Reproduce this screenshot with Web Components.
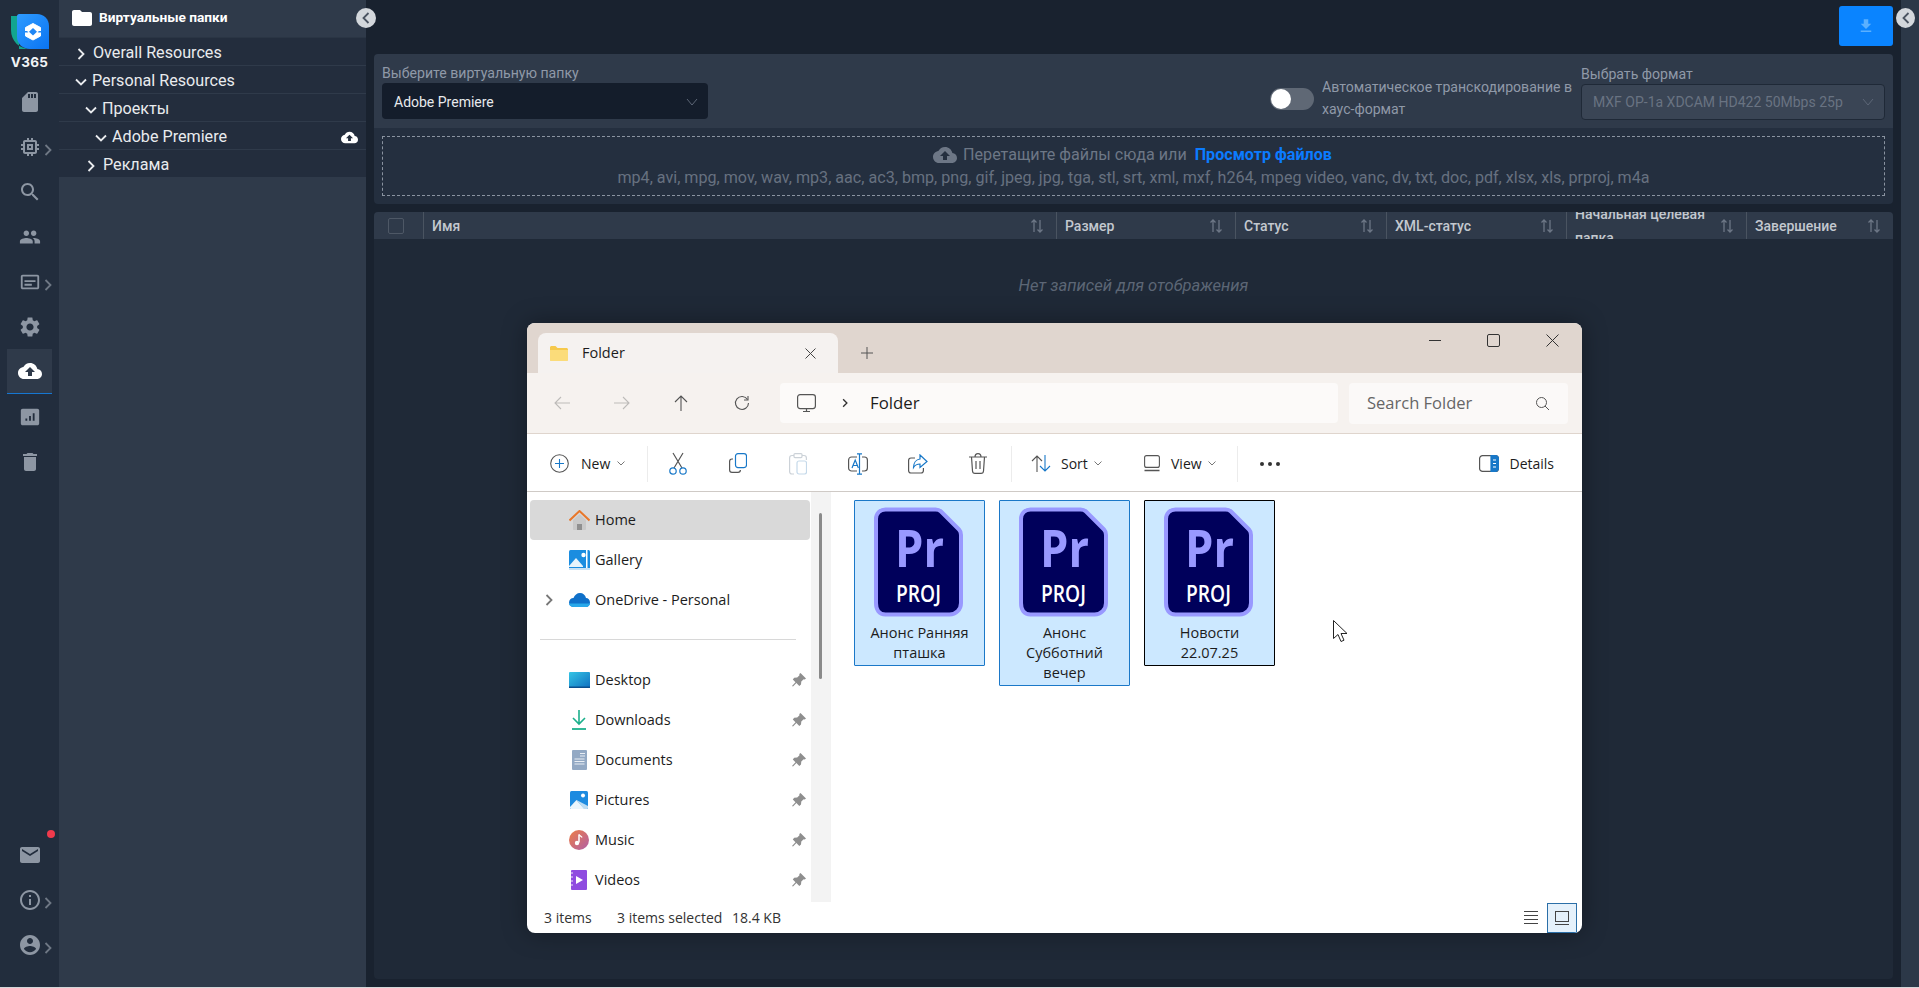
<!DOCTYPE html>
<html lang="ru">
<head>
<meta charset="utf-8">
<title>V365</title>
<style>
  html, body { margin: 0; height: 100%; background: #d4d6d8; overflow: hidden; }
  body { font-family: Roboto, "Liberation Sans", sans-serif; }
  #app { display: flex; height: 987px; position: relative; background: #19222f; }
</style>
</head>
<body>
<div id="app">
  <v-rail></v-rail>
  <v-folders></v-folders>
  <v-main></v-main>
  <v-strip></v-strip>
  <ex-window></ex-window>
</div>

<script>
const MI = {
  sd: "M18 2h-8L4.02 8 4 20c0 1.1.9 2 2 2h12c1.1 0 2-.9 2-2V4c0-1.1-.9-2-2-2zm-6 6h-2V4h2v4zm3 0h-2V4h2v4zm3 0h-2V4h2v4z",
  chip: "M15 9H9v6h6V9zm-2 4h-2v-2h2v2zm8-2V9h-2V7c0-1.1-.9-2-2-2h-2V3h-2v2h-2V3H9v2H7c-1.1 0-2 .9-2 2v2H3v2h2v2H3v2h2v2c0 1.1.9 2 2 2h2v2h2v-2h2v2h2v-2h2c1.1 0 2-.9 2-2v-2h2v-2h-2v-2h2zm-4 6H7V7h10v10z",
  search: "M15.5 14h-.79l-.28-.27C15.41 12.59 16 11.11 16 9.5 16 5.91 13.09 3 9.5 3S3 5.91 3 9.5 5.91 16 9.5 16c1.61 0 3.09-.59 4.23-1.57l.27.28v.79l5 4.99L20.49 19l-4.99-5zm-6 0C7.01 14 5 11.99 5 9.5S7.01 5 9.5 5 14 7.01 14 9.5 11.99 14 9.5 14z",
  people: "M16 11c1.66 0 2.99-1.34 2.99-3S17.66 5 16 5c-1.66 0-3 1.34-3 3s1.34 3 3 3zm-8 0c1.66 0 2.99-1.34 2.99-3S9.66 5 8 5C6.34 5 5 6.34 5 8s1.34 3 3 3zm0 2c-2.33 0-7 1.17-7 3.5V19h14v-2.5c0-2.33-4.67-3.5-7-3.5zm8 0c-.29 0-.62.02-.97.05 1.16.84 1.97 1.97 1.97 3.45V19h6v-2.5c0-2.33-4.67-3.5-7-3.5z",
  card: "M20 4H4c-1.1 0-2 .9-2 2v12c0 1.1.9 2 2 2h16c1.1 0 2-.9 2-2V6c0-1.1-.9-2-2-2zm0 14H4V6h16v12zM6 10h12v2H6zm0 4h8v2H6z",
  gear: "M19.14 12.94c.04-.3.06-.61.06-.94 0-.32-.02-.64-.07-.94l2.03-1.58c.18-.14.23-.41.12-.61l-1.92-3.32c-.12-.22-.37-.29-.59-.22l-2.39.96c-.5-.38-1.03-.7-1.62-.94l-.36-2.54c-.04-.24-.24-.41-.48-.41h-3.84c-.24 0-.43.17-.47.41l-.36 2.54c-.59.24-1.13.57-1.62.94l-2.39-.96c-.22-.08-.47 0-.59.22L2.74 8.87c-.12.21-.08.47.12.61l2.03 1.58c-.05.3-.09.63-.09.94s.02.64.07.94l-2.03 1.58c-.18.14-.23.41-.12.61l1.92 3.32c.12.22.37.29.59.22l2.39-.96c.5.38 1.03.7 1.62.94l.36 2.54c.05.24.24.41.48.41h3.84c.24 0 .44-.17.47-.41l.36-2.54c.59-.24 1.13-.56 1.62-.94l2.39.96c.22.08.47 0 .59-.22l1.92-3.32c.12-.22.07-.47-.12-.61l-2.01-1.58zM12 15.6c-1.98 0-3.6-1.62-3.6-3.6s1.62-3.6 3.6-3.6 3.6 1.62 3.6 3.6-1.62 3.6-3.6 3.6z",
  cloud: "M19.35 10.04C18.67 6.59 15.64 4 12 4 9.11 4 6.6 5.64 5.35 8.04 2.34 8.36 0 10.91 0 14c0 3.31 2.69 6 6 6h13c2.76 0 5-2.24 5-5 0-2.64-2.05-4.78-4.65-4.96zM14 13v4h-4v-4H7l5-5 5 5h-3z",
  chart: "M4 3h16c1.1 0 2 .9 2 2v14c0 1.1-.9 2-2 2H4c-1.1 0-2-.9-2-2V5c0-1.1.9-2 2-2zm3 13h2v-2.5H7V16zm4 0h2v-5h-2v5zm4 0h2V8h-2v8z",
  trash: "M6 19c0 1.1.9 2 2 2h8c1.1 0 2-.9 2-2V7H6v12zM19 4h-3.5l-1-1h-5l-1 1H5v2h14V4z",
  mail: "M20 4H4c-1.1 0-2 .9-2 2v12c0 1.1.9 2 2 2h16c1.1 0 2-.9 2-2V6c0-1.1-.9-2-2-2zm0 4l-8 5-8-5V6l8 5 8-5v2z",
  info: "M11 7h2v2h-2zm0 4h2v6h-2zm1-9C6.48 2 2 6.48 2 12s4.48 10 10 10 10-4.48 10-10S17.52 2 12 2zm0 18c-4.41 0-8-3.59-8-8s3.59-8 8-8 8 3.59 8 8-3.59 8-8 8z",
  user: "M12 2C6.48 2 2 6.48 2 12s4.48 10 10 10 10-4.48 10-10S17.52 2 12 2zm0 3c1.66 0 3 1.34 3 3s-1.34 3-3 3-3-1.34-3-3 1.34-3 3-3zm0 14.2c-2.5 0-4.71-1.28-6-3.22.03-1.99 4-3.08 6-3.08 1.99 0 5.97 1.09 6 3.08-1.29 1.94-3.5 3.22-6 3.22z",
  download: "M19 9h-4V3H9v6H5l7 7 7-7zM5 18v2h14v-2H5z",
  folder: "M10 4H4c-1.1 0-2 .9-2 2v12c0 1.1.9 2 2 2h16c1.1 0 2-.9 2-2V8c0-1.1-.9-2-2-2h-8l-2-2z"
};
function mi(name, size, color) {
  return `<svg width="${size}" height="${size}" viewBox="0 0 24 24" fill="${color}"><path d="${MI[name]}"/></svg>`;
}
const CHEV_R = `<svg width="8" height="12" viewBox="0 0 8 12" fill="none" stroke="currentColor" stroke-width="1.8"><path d="M1.5 1l5 5-5 5"/></svg>`;
const CHEV_D = `<svg width="12" height="8" viewBox="0 0 12 8" fill="none" stroke="currentColor" stroke-width="1.8"><path d="M1 1.5l5 5 5-5"/></svg>`;

class VRail extends HTMLElement {
  constructor() { super(); this.attachShadow({mode: "open"}); }
  connectedCallback() { this.render(); }
  item(name, size, more, active) {
    return `<div class="it ${active ? "on" : ""}">${mi(name, size, active ? "#fff" : "#8d96a3")}${more ? `<span class="more">${CHEV_R}</span>` : ""}</div>`;
  }
  render() {
    this.shadowRoot.innerHTML = `<style>
      :host { display: flex; flex-direction: column; width: 59px; flex: none; background: #222d3d; box-sizing: border-box; padding-bottom: 20px; }
      .logo { height: 79px; box-sizing: border-box; padding-top: 14px; display: flex; flex-direction: column; align-items: center; }
      .logo b { color: #f2f4f6; font: 700 13.5px/1 "Inter", Roboto, sans-serif; margin-top: 7px; letter-spacing: .3px; }
      .it { height: 45px; position: relative; display: flex; align-items: center; justify-content: center; }
      .it.on { margin: 0 7px; background: #2f3a4a; border-bottom: 1px solid #1677d2; box-sizing: border-box; }
      .more { position: absolute; left: 44px; top: 50%; margin-top: -6px; color: #6f7885; }
      .spring { flex: 1; }
      .dot { position: absolute; left: 47px; top: -2px; width: 8px; height: 8px; border-radius: 50%; background: #f03a4c; }
    </style>
    <div class="logo">
      <svg width="38" height="35" viewBox="0 0 38 35">
        <defs><linearGradient id="lg" x1="0" y1="0" x2="1" y2="1"><stop offset="0" stop-color="#2f9bff"/><stop offset="1" stop-color="#0a74f2"/></linearGradient></defs>
        <path d="M0 2h8v33h12C8 35 0 27 0 16z" fill="#12a58f"/>
        <path d="M8 0h18c7 0 12 5 12 12v23H19C12 35 6 30 6 23V2c0-1 1-2 2-2z" fill="url(#lg)"/>
        <path d="M22 9.500l7.500 4v8.500l-7.500 4-7.500-4v-8.500z" fill="#fff" stroke="#fff" stroke-width="1" stroke-linejoin="round"/>
        <path d="M22 14l4 3.700-4 3.700-4-3.700zM13.500 17h4l-1.500.8 1.500.8h-4zM30.500 17h-4l1.500.8-1.500.8h4z" fill="#1f86f5"/>
      </svg>
      <b>V365</b>
    </div>
    ${this.item("sd", 24)}
    ${this.item("chip", 24, true)}
    ${this.item("search", 24)}
    ${this.item("people", 22)}
    ${this.item("card", 22, true)}
    ${this.item("gear", 24)}
    ${this.item("cloud", 24, false, true)}
    ${this.item("chart", 22)}
    ${this.item("trash", 24)}
    <div class="spring"></div>
    <div class="it">${mi("mail", 24, "#8d96a3")}<span class="dot"></span></div>
    ${this.item("info", 24, true)}
    ${this.item("user", 24, true)}`;
  }
}
customElements.define("v-rail", VRail);

class VTreeRow extends HTMLElement {
  constructor() { super(); this.attachShadow({mode: "open"}); }
  connectedCallback() {
    const lvl = +this.getAttribute("level") || 0;
    const open = this.hasAttribute("open");
    this.shadowRoot.innerHTML = `<style>
      :host { display: flex; align-items: center; height: 28px; box-sizing: border-box; background: #232d3d; border-bottom: 1px solid #2f3a4a; color: #e9ebee; font: 400 16.15px/1 Roboto, sans-serif; padding: 4px 8px 0 ${17 + lvl * 10}px; }
      .c { width: 17px; flex: none; display: flex; justify-content: flex-start; }
      .o { margin-left: -1px; }
      .t { flex: 1; }
      svg { display: block; }
    </style>
    <span class="c ${open ? "o" : ""}">${open ? CHEV_D : `<span style="margin-left:1px">${CHEV_R}</span>`}</span>
    <span class="t"><slot></slot></span>
    ${this.hasAttribute("action") ? mi("cloud", 17, "#fff") : ""}`;
  }
}
customElements.define("v-tree-row", VTreeRow);

class VFolders extends HTMLElement {
  constructor() { super(); this.attachShadow({mode: "open"}); }
  connectedCallback() {
    this.shadowRoot.innerHTML = `<style>
      :host { display: block; width: 307px; flex: none; background: #2f3a4a; position: relative; }
      .head { height: 38px; box-sizing: border-box; padding: 0 0 2px 11px; display: flex; align-items: center; gap: 5px; color: #fff; font: 700 13.7px/1 Roboto, sans-serif; border-bottom: 1px solid #2a3544; }
      .toggle { position: absolute; right: -10px; top: 8px; width: 20px; height: 20px; border-radius: 50%; background: #d3d7dc; color: #4a5361; display: flex; align-items: center; justify-content: center; z-index: 2; }
      .toggle svg { transform: scaleX(-1); }
    </style>
    <div class="head">${mi("folder", 24, "#fff")}<span>Виртуальные папки</span></div>
    <v-tree-row>Overall Resources</v-tree-row>
    <v-tree-row open>Personal Resources</v-tree-row>
    <v-tree-row level="1" open>Проекты</v-tree-row>
    <v-tree-row level="2" open action>Adobe Premiere</v-tree-row>
    <v-tree-row level="1">Реклама</v-tree-row>
    <div class="toggle">${CHEV_R}</div>`;
  }
}
customElements.define("v-folders", VFolders);

class VSelect extends HTMLElement {
  constructor() { super(); this.attachShadow({mode: "open"}); }
  connectedCallback() {
    const off = this.hasAttribute("disabled");
    this.shadowRoot.innerHTML = `<style>
      :host { display: flex; align-items: center; height: 36px; box-sizing: border-box; border-radius: 4px; padding: ${off ? 0 : 2}px 10px 0 ${off ? 11 : 12}px; font: 400 14px/1 Roboto, sans-serif;
        background: ${off ? "#3a4555" : "#141d2b"}; color: ${off ? "#697382" : "#e8eaed"}; ${off ? "border: 1px solid #1f2937;" : ""} }
      span { flex: 1; white-space: nowrap; }
      svg { color: #5d6777; }
    </style><span><slot></slot></span><svg width="12" height="8" viewBox="0 0 12 8" fill="none" stroke="currentColor" stroke-width="1"><path d="M1 1l5 6 5-6"/></svg>`;
  }
}
customElements.define("v-select", VSelect);

class VUpload extends HTMLElement {
  constructor() { super(); this.attachShadow({mode: "open"}); }
  connectedCallback() {
    this.shadowRoot.innerHTML = `<style>
      :host { display: block; border-radius: 4px; overflow: hidden; color: #8f99a8; font: 400 14.1px/20px Roboto, sans-serif; }
      .form { background: #2f3a4a; height: 74px; box-sizing: border-box; padding: 9px 8px 8px; display: flex; justify-content: space-between; }
      .left { width: 326px; }
      .right { display: flex; align-items: flex-end; }
      .sw { width: 44px; height: 22px; border-radius: 11px; background: #5f6875; margin: 0 8px 10px 0; display: flex; align-items: center; padding-left: 1px; box-sizing: border-box; }
      .sw i { width: 20px; height: 20px; border-radius: 50%; background: #fff; }
      .auto { width: 252px; line-height: 22px; margin-right: 7px; }
      .fmt { width: 304px; }
      .drop { background: #242f3f; padding: 8px; height: 76px; box-sizing: border-box; }
      .dash { border: 1px dashed #8a93a0; height: 60px; box-sizing: border-box; text-align: center; font-size: 16.13px; line-height: 24px; color: #677180; padding-top: 6px; }
      .l1 { display: flex; justify-content: center; align-items: center; gap: 6px; color: #6d7786; height: 23px; }
      .l1 a { color: #0b7bff; font-weight: 700; margin-left: 2px; }
      .l1 svg { display: block; margin-left: -2px; }
    </style>
    <div class="form">
      <div class="left"><div>Выберите виртуальную папку</div><v-select>Adobe Premiere</v-select></div>
      <div class="right">
        <div class="sw"><i></i></div>
        <div class="auto">Автоматическое транскодирование в хаус-формат</div>
        <div class="fmt"><div>Выбрать формат</div><v-select disabled>MXF OP-1a XDCAM HD422 50Mbps 25p</v-select></div>
      </div>
    </div>
    <div class="drop"><div class="dash">
      <div class="l1">${mi("cloud", 24, "#6d7786")}<span>Перетащите файлы сюда или</span><a>Просмотр файлов</a></div>
      <div>mp4, avi, mpg, mov, wav, mp3, aac, ac3, bmp, png, gif, jpeg, jpg, tga, stl, srt, xml, mxf, h264, mpeg video, vanc, dv, txt, doc, pdf, xlsx, xls, prproj, m4a</div>
    </div></div>`;
  }
}
customElements.define("v-upload", VUpload);

class VTable extends HTMLElement {
  constructor() { super(); this.attachShadow({mode: "open"}); }
  connectedCallback() {
    const sort = `<svg width="14" height="14" viewBox="0 0 14 14" fill="none" stroke="#6d7786" stroke-width="1.300"><path d="M4 13V1M1.500 3.500L4 1l2.500 2.500M10 1v12M7.500 10.500L10 13l2.500-2.500"/></svg>`;
    const cols = ["Имя", "Размер", "Статус", "XML-статус", "Начальная целевая папка", "Завершение"];
    this.shadowRoot.innerHTML = `<style>
      :host { display: flex; flex-direction: column; background: #1f2937; border-radius: 4px; overflow: hidden; }
      .hd { display: grid; grid-template-columns: 49px 633px 179px 151px 180px 180px 147px; height: 27px; background: #2f3a4a; color: #c3c8cf; font: 500 14px/24px Roboto, sans-serif; }
      .hd > div { display: flex; align-items: center; border-left: 1px solid #4a5461; padding: 0 12px 0 8px; overflow: hidden; }
      .hd > div:first-child { border: 0; padding: 0 0 0 14px; }
      .hd span { flex: 1; }
      .cb { width: 14px; height: 14px; border: 1px solid #4e5866; border-radius: 2px; }
      .empty { text-align: center; color: #5c6675; font: italic 400 16.6px/1 Roboto, sans-serif; padding-top: 39px; }
    </style>
    <div class="hd"><div><i class="cb"></i></div>${cols.map(c => `<div><span>${c}</span>${sort}</div>`).join("")}</div>
    <div class="empty">Нет записей для отображения</div>`;
  }
}
customElements.define("v-table", VTable);

class VMain extends HTMLElement {
  constructor() { super(); this.attachShadow({mode: "open"}); }
  connectedCallback() {
    this.shadowRoot.innerHTML = `<style>
      :host { flex: 1; min-width: 0; display: flex; flex-direction: column; box-sizing: border-box; padding: 0 8px 8px; }
      .top { height: 54px; flex: none; display: flex; justify-content: flex-end; align-items: flex-start; padding-top: 6px; box-sizing: border-box; }
      .btn { width: 54px; height: 40px; background: #0a84ff; border-radius: 3px; display: flex; align-items: center; justify-content: center; }
      v-table { flex: 1; margin-top: 8px; }
    </style>
    <div class="top"><div class="btn">${mi("download", 18, "#5bb0ff")}</div></div>
    <v-upload></v-upload>
    <v-table></v-table>`;
  }
}
customElements.define("v-main", VMain);

class VStrip extends HTMLElement {
  constructor() { super(); this.attachShadow({mode: "open"}); }
  connectedCallback() {
    this.shadowRoot.innerHTML = `<style>
      :host { display: block; width: 18px; flex: none; background: #2c3848; position: relative; }
      .toggle { position: absolute; left: -5px; top: 8px; width: 19px; height: 20px; border-radius: 50%; background: #d3d7dc; color: #4a5361; display: flex; align-items: center; justify-content: center; }
      .toggle svg { transform: scaleX(-1); }
    </style><div class="toggle">${CHEV_R}</div>`;
  }
}
customElements.define("v-strip", VStrip);

/* explorer window */
const XI = {
  folder: `<svg width="18" height="15" viewBox="0 0 18 15"><path d="M0 1.500C0 .7.7 0 1.500 0h4l2 2H16.500c.8 0 1.500.7 1.500 1.500V13.500c0 .8-.7 1.500-1.500 1.500h-15C.7 15 0 14.300 0 13.500z" fill="#f6c94c"/><path d="M0 4h18v9.500c0 .8-.7 1.500-1.500 1.500h-15C.7 15 0 14.300 0 13.500z" fill="#fbdc7a"/></svg>`,
  close: `<svg width="11" height="11" viewBox="0 0 11 11" stroke="#444" fill="none"><path d="M.5.5l10 10M10.500.5l-10 10"/></svg>`,
  plus: `<svg width="12" height="12" viewBox="0 0 12 12" stroke="#555" fill="none"><path d="M6 0v12M0 6h12"/></svg>`,
  back: c => `<svg width="16" height="14" viewBox="0 0 16 14" stroke="${c}" fill="none" stroke-width="1.100"><path d="M16 7H1M7 1L1 7l6 6"/></svg>`,
  fwd: c => `<svg width="16" height="14" viewBox="0 0 16 14" stroke="${c}" fill="none" stroke-width="1.100"><path d="M0 7h15M9 1l6 6-6 6"/></svg>`,
  up: `<svg width="14" height="16" viewBox="0 0 14 16" stroke="#555" fill="none" stroke-width="1.100"><path d="M7 16V1M1 7l6-6 6 6"/></svg>`,
  refresh: `<svg width="16" height="16" viewBox="0 0 16 16" stroke="#555" fill="none" stroke-width="1.100"><path d="M13.500 4.500A6.500 6.500 0 1 0 14.500 8"/><path d="M14 1v4h-4"/></svg>`,
  monitor: `<svg width="19" height="19" viewBox="0 0 19 19" stroke="#555" fill="none" stroke-width="1.200"><rect x=".6" y=".6" width="17.800" height="14" rx="2.500"/><path d="M6 17.500h7M9.500 14.500v3"/></svg>`,
  mag: `<svg width="13" height="13" viewBox="0 0 13 13" stroke="#555" fill="none"><circle cx="5.500" cy="5.500" r="5"/><path d="M9 9l4 4"/></svg>`,
  newp: `<svg width="19" height="19" viewBox="0 0 19 19" fill="none" stroke-width="1.100"><circle cx="9.500" cy="9.500" r="8.800" stroke="#555"/><path d="M9.500 5v9M5 9.500h9" stroke="#1878c8"/></svg>`,
  cut: `<svg width="18" height="23" viewBox="0 0 18 23" fill="none" stroke-width="1.200"><path d="M4 1l9 15M14 1L5 16" stroke="#555"/><circle cx="4" cy="19" r="3.200" stroke="#1878c8"/><circle cx="14" cy="19" r="3.200" stroke="#1878c8"/></svg>`,
  copy: `<svg width="18" height="21" viewBox="0 0 18 21" fill="none" stroke-width="1.200"><rect x="6.500" y=".6" width="11" height="14" rx="2.500" stroke="#1878c8"/><path d="M4 6H3c-1.500 0-2.400 1-2.400 2.400V17c0 1.500 1 2.400 2.400 2.400h6c1.500 0 2.400-1 2.400-2.400" stroke="#555"/></svg>`,
  paste: `<svg width="18" height="22" viewBox="0 0 18 22" fill="none" stroke-width="1.200"><path d="M5 2.500H3C1.500 2.500.6 3.500.6 5v13.500C.6 20 1.500 21 3 21h2M13 2.500h2c1.500 0 2.400 1 2.400 2.500v2" stroke="#ccd2d8"/><rect x="5" y=".6" width="8" height="4" rx="1" stroke="#ccd2d8"/><rect x="8" y="8" width="9.500" height="13" rx="2" stroke="#c5d9ea"/></svg>`,
  rename: `<svg width="20" height="22" viewBox="0 0 20 22" fill="none" stroke-width="1.200"><rect x=".6" y="4" width="18.800" height="14" rx="3" stroke="#555"/><rect x="9" y="1" width="5" height="20" fill="#fff" stroke="none"/><path d="M11.500 1v20M9 .8h5M9 21.200h5" stroke="#1878c8"/><path d="M4 15l3.200-8 3.200 8M5 12.500h4.500" stroke="#1878c8"/></svg>`,
  share: `<svg width="20" height="20" viewBox="0 0 20 20" fill="none" stroke-width="1.200"><path d="M7 4H3C1.500 4 .6 5 .6 6.400V16.500C.6 18 1.500 19 3 19h10c1.500 0 2.400-1 2.400-2.500V14" stroke="#555"/><path d="M12 1l7 6.500-7 6V10c-3 0-5 1-6.500 3.500C5.500 9 8 5.500 12 5z" stroke="#1878c8"/></svg>`,
  bin: `<svg width="18" height="21" viewBox="0 0 18 21" fill="none" stroke="#555" stroke-width="1.200"><path d="M0 4h18M6 4c0-2 1-3.400 3-3.400S12 2 12 4M2.500 4l1 14c.1 1.500 1 2.400 2.500 2.400h6c1.500 0 2.400-1 2.500-2.400l1-14M7 8v8M11 8v8"/></svg>`,
  sort: `<svg width="20" height="17" viewBox="0 0 20 17" fill="none" stroke-width="1.100"><path d="M6 17V1M1 6l5-5 5 5" stroke="#555"/><path d="M14 0v16M9 11l5 5 5-5" stroke="#1878c8"/></svg>`,
  view: `<svg width="16" height="17" viewBox="0 0 16 17" fill="none" stroke="#555" stroke-width="1.100"><rect x=".6" y=".6" width="14.800" height="11.800" rx="2"/><path d="M.5 15.500h15" stroke-width="1.500"/></svg>`,
  dots: `<svg width="20" height="4" viewBox="0 0 20 4" fill="#333"><circle cx="2" cy="2" r="2"/><circle cx="10" cy="2" r="2"/><circle cx="18" cy="2" r="2"/></svg>`,
  details: `<svg width="20" height="17" viewBox="0 0 20 17" fill="none" stroke-width="1.200"><rect x=".6" y=".6" width="18.800" height="15.800" rx="3" stroke="#555"/><path d="M12 .6h4.500c1.500 0 2.900 1.400 2.900 2.900v10c0 1.500-1.400 2.900-2.900 2.900H12z" fill="#1878c8" stroke="#1878c8"/><path d="M14 5h3M14 8.500h3M14 12h3" stroke="#fff"/></svg>`,
  dn: `<svg style="margin-left:-5.500px" width="8" height="5" viewBox="0 0 8 5" fill="none" stroke="#777"><path d="M.5.500L4 4 7.500.500"/></svg>`
};
const NAV = {
  home: `<svg width="21" height="21" viewBox="0 0 21 21"><path d="M4 10l6.500-6 6.500 6v9c0 .6-.4 1-1 1h-11c-.6 0-1-.4-1-1z" fill="#c9c9c9"/><path d="M8 14h5v6H8z" fill="#8f8f8f"/><path d="M.5 10.500L10.500 1l10 9.500" fill="none" stroke="#e8772a" stroke-width="2"/></svg>`,
  gallery: `<svg width="21" height="20" viewBox="0 0 21 20"><rect width="21" height="20" rx="1.500" fill="#1b8de0"/><path d="M0 16l7-8 7 8v1H0z" fill="#e7f4fc"/><circle cx="14.500" cy="5" r="2.200" fill="#fff"/><rect x="17" y="0" width="1.500" height="20" fill="#fff"/><path d="M0 18h21v2H0z" fill="#c9e2f5"/></svg>`,
  onedrive: `<svg width="21" height="14" viewBox="0 0 21 14"><path d="M5 14C2 14 0 12 0 9.500 0 7 2 5 4.500 5 5.500 2 8 0 11 0c3 0 5.500 2 6 5 2.200 0 4 2 4 4.500S19 14 17 14z" fill="#0f70c9"/><path d="M0 10.500c0 2 2 3.500 5 3.500h12c2 0 4-1.700 4-3.500H0z" fill="#28a8ea"/></svg>`,
  desktop: `<svg width="21" height="16" viewBox="0 0 21 16"><defs><linearGradient id="dk" x1="0" y1="0" x2="1" y2="1"><stop offset="0" stop-color="#35c5e5"/><stop offset="1" stop-color="#0f6fc0"/></linearGradient></defs><rect width="21" height="16" rx="1" fill="url(#dk)"/><rect y="14.500" width="21" height="1.500" fill="#0b4f8e"/></svg>`,
  downloads: `<svg width="16" height="20" viewBox="0 0 16 20" fill="none" stroke="#1cb08c" stroke-width="1.600"><path d="M8 0v14M2 8l6 6 6-6"/><path d="M1 19h14" stroke-width="1.800"/></svg>`,
  documents: `<svg width="15" height="20" viewBox="0 0 15 20"><rect width="15" height="20" rx="1" fill="#93a9c4"/><path d="M8 3.500h5M8 6h5M2.500 9h10M2.500 11.500h10M2.500 14h10" stroke="#e9eef4"/></svg>`,
  pictures: `<svg width="18" height="18" viewBox="0 0 18 18"><rect width="18" height="18" rx="1.500" fill="#1d8be0"/><path d="M0 16l6.500-7 8 9H1.500C.6 18 0 17.400 0 16.500z" fill="#eaf5fc"/><path d="M6.500 9L18 15v1.500c0 .8-.7 1.500-1.500 1.500H14z" fill="#bcdcf3"/><circle cx="13" cy="4.500" r="2" fill="#fff"/></svg>`,
  music: `<svg width="20" height="20" viewBox="0 0 20 20"><defs><linearGradient id="ms" x1="0" y1="0" x2="1" y2="1"><stop offset="0" stop-color="#ee7d45"/><stop offset="1" stop-color="#b05fa8"/></linearGradient></defs><circle cx="10" cy="10" r="10" fill="url(#ms)"/><path d="M10 4.500v8" stroke="#fff" stroke-width="1.500"/><path d="M10 4.500c1 1.800 2.500 1.800 3 3" stroke="#fff" fill="none" stroke-width="1.300"/><circle cx="8" cy="13" r="2.200" fill="#fff"/></svg>`,
  videos: `<svg width="16" height="20" viewBox="0 0 16 20"><rect width="16" height="20" rx="1" fill="#8f4be0"/><path d="M5 6l7 4-7 4z" fill="#fff"/><path d="M1 2v2M1 6v2M1 10v2M1 14v2" stroke="#d9c4f5" stroke-width="1.300"/></svg>`
};

class ExNav extends HTMLElement {
  constructor() { super(); this.attachShadow({mode: "open"}); }
  connectedCallback() {
    const pin = this.hasAttribute("pin");
    const pinSvg = `<svg width="14" height="14" viewBox="0 0 14 14" fill="#8e8e8e"><path d="M8.500 0L14 5.500l-1.300 1-1-.3-2.400 2.400-.3 3L7.300 13 4.400 10 1 13.500 0 13l3.500-3.800L.8 6.500l1.400-1.700 3-.2 2.300-2.300L7.300 1z"/></svg>`;
    this.shadowRoot.innerHTML = `<style>
      :host { display: flex; align-items: center; height: 40px; margin: 0 1px 0 3px; border-radius: 4px; font: 400 14.500px/1 "Open Sans", sans-serif; color: #1c1c1c; box-sizing: border-box; }
      :host([active]) { background: #d9d9d9; }
      .ch { width: 34px; padding-left: 15px; box-sizing: border-box; color: #777; flex: none; display: flex; }
      .ic { width: 30px; flex: none; display: flex; justify-content: center; margin-right: 1px; }
      .t { flex: 1; white-space: nowrap; }
      .p { width: 14px; margin-right: 4px; display: flex; }
    </style>
    <span class="ch">${this.hasAttribute("expand") ? CHEV_R : ""}</span>
    <span class="ic">${NAV[this.getAttribute("icon")]}</span>
    <span class="t"><slot></slot></span>
    ${pin ? `<span class="p">${pinSvg}</span>` : ""}`;
  }
}
customElements.define("ex-nav", ExNav);

class ExFile extends HTMLElement {
  constructor() { super(); this.attachShadow({mode: "open"}); }
  connectedCallback() {
    this.shadowRoot.innerHTML = `<style>
      :host { display: block; width: 131px; box-sizing: border-box; background: #cce8ff; border: 1px solid #1b78c8; border-radius: 1px; font: 400 14.500px/20px "Open Sans", sans-serif; color: #1c1c1c; text-align: center; padding: 0 13px 2px; }
      :host([focus]) { border-color: #000; }
      svg { display: block; margin: 6px -13px 6px; width: 129px; }
      text { font-family: "Open Sans", sans-serif; }
    </style>
    <svg height="110" viewBox="-18.5 0 129 110">
      <path d="M12 2.500h50c2.500 0 4 .6 5.500 2l18 18c1.500 1.500 2 3 2 5.500v68c0 6.500-5 11.500-11.500 11.500H12C5.500 107.500 2.500 102.500 2.500 96V12C2.500 6.500 6.500 2.500 12 2.500z" fill="#00005b" stroke="#9999ff" stroke-width="4"/>
      <text x="46" y="60" text-anchor="middle" font-size="52" font-weight="700" fill="#9999ff" textLength="49" lengthAdjust="spacingAndGlyphs">Pr</text>
      <text x="45" y="95" text-anchor="middle" font-size="23" font-weight="600" fill="#fff" textLength="45" lengthAdjust="spacingAndGlyphs">PROJ</text>
    </svg>
    <slot></slot>`;
  }
}
customElements.define("ex-file", ExFile);

class ExWindow extends HTMLElement {
  constructor() { super(); this.attachShadow({mode: "open"}); }
  connectedCallback() {
    this.shadowRoot.innerHTML = `<style>
      :host { position: absolute; left: 527px; top: 323px; width: 1055px; height: 610px; display: flex; flex-direction: column; background: #fff; border-radius: 8px; font: 400 14.500px/1 "Open Sans", sans-serif; color: #1c1c1c; box-shadow: 0 0 24px rgba(0,0,0,.35); }
      .clip { display: flex; flex-direction: column; flex: 1; min-height: 0; border-radius: 8px; overflow: hidden; position: relative; }
      .title { height: 50px; flex: none; background: #e0d6cf; display: flex; align-items: flex-end; padding-left: 11px; box-sizing: border-box; }
      .tab { width: 300px; height: 40px; background: #f5f2f0; border-radius: 8px 8px 0 0; display: flex; align-items: center; padding: 0 22px 0 12px; box-sizing: border-box; gap: 14px; }
      .tab span { flex: 1; }
      .plus { width: 58px; height: 40px; display: flex; align-items: center; justify-content: center; }
      .ctl { margin-left: auto; align-self: flex-start; display: flex; height: 34px; align-items: center; padding-right: 23px; gap: 46px; }
      .min { width: 12px; height: 1px; background: #333; }
      .max { width: 11px; height: 11px; border: 1.200px solid #333; border-radius: 2px; }
      .nav { height: 61px; flex: none; background: #f6f2ef; border-bottom: 1px solid #dfd5cd; box-sizing: border-box; display: flex; align-items: center; padding-left: 27px; }
      .nav .b { width: 60px; display: flex; }
      .addr { margin-left: -14px; width: 558px; height: 40px; background: #fcfaf9; border-radius: 4px; display: flex; align-items: center; padding-left: 17px; box-sizing: border-box; font-size: 16.8px; }
      .addr .gt { margin: 0 22px 0 26px; width: 6px; color: #333; display: flex; }
      .addr .gt svg { width: 6px; }
      .srch { margin-left: 11px; width: 219px; height: 41px; background: #fbf9f8; border-radius: 4px; display: flex; align-items: center; padding: 0 19px 0 18px; box-sizing: border-box; font-size: 16.5px; color: #666; justify-content: space-between; }
      .tools { height: 58px; flex: none; border-bottom: 1px solid #cfcac6; box-sizing: border-box; display: flex; align-items: center; padding: 2px 0 0 23px; font-size: 14px; }
      .tb { display: flex; align-items: center; gap: 12px; }
      .sep { width: 1px; height: 36px; background: #ececec; flex: none; }
      .ic { width: 60px; display: flex; justify-content: center; flex: none; }
      .body { flex: 1; min-height: 0; display: flex; }
      .navp { width: 284px; flex: none; box-sizing: border-box; padding-top: 8px; }
      .rule { height: 1px; background: #d8d8d8; margin: 19px 15px 20px 13px; }
      .track { width: 20px; flex: none; background: #f3f3f3; box-sizing: border-box; padding: 21px 0 0 8px; }
      .thumb { width: 3px; height: 166px; background: #8a8a8a; border-radius: 2px; }
      .files { flex: 1; display: flex; align-items: flex-start; gap: 14px; padding: 8px 0 0 23px; }
      .status { height: 31px; flex: none; display: flex; align-items: center; padding-left: 17px; font-size: 14px; color: #333; }
      .vw { margin-left: auto; display: flex; align-items: center; margin-right: 5px; gap: 9px; }
      .grid { width: 30px; height: 30px; box-sizing: border-box; background: #e5f1fb; border: 1px solid #2b6fa8; display: flex; align-items: center; justify-content: center; }
      .cursor { position: absolute; left: 806px; top: 297px; }
    </style>
    <div class="clip">
    <div class="title">
      <div class="tab">${XI.folder}<span>Folder</span>${XI.close}</div>
      <div class="plus">${XI.plus}</div>
      <div class="ctl"><i class="min"></i><i class="max"></i><span style="display:flex"><svg width="13" height="13" viewBox="0 0 13 13" stroke="#333" fill="none"><path d="M.5.5l12 12M12.500.5l-12 12"/></svg></span></div>
    </div>
    <div class="nav">
      <span class="b">${XI.back("#bdbbb9")}</span><span class="b">${XI.fwd("#bdbbb9")}</span><span class="b">${XI.up}</span><span class="b">${XI.refresh}</span>
      <div class="addr">${XI.monitor}<span class="gt">${CHEV_R}</span><span>Folder</span></div>
      <div class="srch"><span>Search Folder</span>${XI.mag}</div>
    </div>
    <div class="tools">
      <div class="tb" style="width:97px">${XI.newp}<span>New</span>${XI.dn}</div>
      <i class="sep"></i>
      <span class="ic">${XI.cut}</span>
      <span class="ic">${XI.copy}</span><span class="ic">${XI.paste}</span><span class="ic">${XI.rename}</span><span class="ic">${XI.share}</span><span class="ic">${XI.bin}</span>
      <i class="sep" style="margin-left:3px"></i>
      <div class="tb" style="width:113px;margin-left:19px">${XI.sort}<span style="margin-left:-2px">Sort</span>${XI.dn}</div>
      <div class="tb" style="width:84px">${XI.view}<span style="margin-left:-1px">View</span>${XI.dn}</div>
      <i class="sep" style="margin-left:9px"></i>
      <span style="display:flex;margin-left:22px">${XI.dots}</span>
      <div class="tb" style="margin-left:auto;margin-right:28px">${XI.details}<span style="margin-left:-2px">Details</span></div>
    </div>
    <div class="body">
      <div class="navp">
        <ex-nav icon="home" active>Home</ex-nav>
        <ex-nav icon="gallery">Gallery</ex-nav>
        <ex-nav icon="onedrive" expand>OneDrive - Personal</ex-nav>
        <div class="rule"></div>
        <ex-nav icon="desktop" pin>Desktop</ex-nav>
        <ex-nav icon="downloads" pin>Downloads</ex-nav>
        <ex-nav icon="documents" pin>Documents</ex-nav>
        <ex-nav icon="pictures" pin>Pictures</ex-nav>
        <ex-nav icon="music" pin>Music</ex-nav>
        <ex-nav icon="videos" pin>Videos</ex-nav>
      </div>
      <div class="track"><div class="thumb"></div></div>
      <div class="files">
        <ex-file>Анонс Ранняя пташка</ex-file>
        <ex-file>Анонс Субботний вечер</ex-file>
        <ex-file focus>Новости 22.07.25</ex-file>
      </div>
    </div>
    <div class="status">
      <span style="width:73px">3 items</span><span style="width:115px">3 items selected</span><span>18.4 KB</span>
      <div class="vw">
        <svg width="14" height="13" viewBox="0 0 14 13" stroke="#444"><path d="M0 .5h14M0 4.500h14M0 8.500h14M0 12.500h14"/></svg>
        <div class="grid"><svg width="14" height="14" viewBox="0 0 14 14" fill="none" stroke="#444"><rect x=".5" y=".5" width="13" height="10"/><path d="M0 13.500h14"/></svg></div>
      </div>
    </div>
    <svg class="cursor" width="14" height="23" viewBox="0 0 14 23" fill="#fff" stroke="#222" stroke-width="1"><path d="M.5.500v18l4.500-4 3 7 3-1.300-3-6.700h6z"/></svg>
    </div>`;
  }
}
customElements.define("ex-window", ExWindow);
</script>
</body>
</html>
